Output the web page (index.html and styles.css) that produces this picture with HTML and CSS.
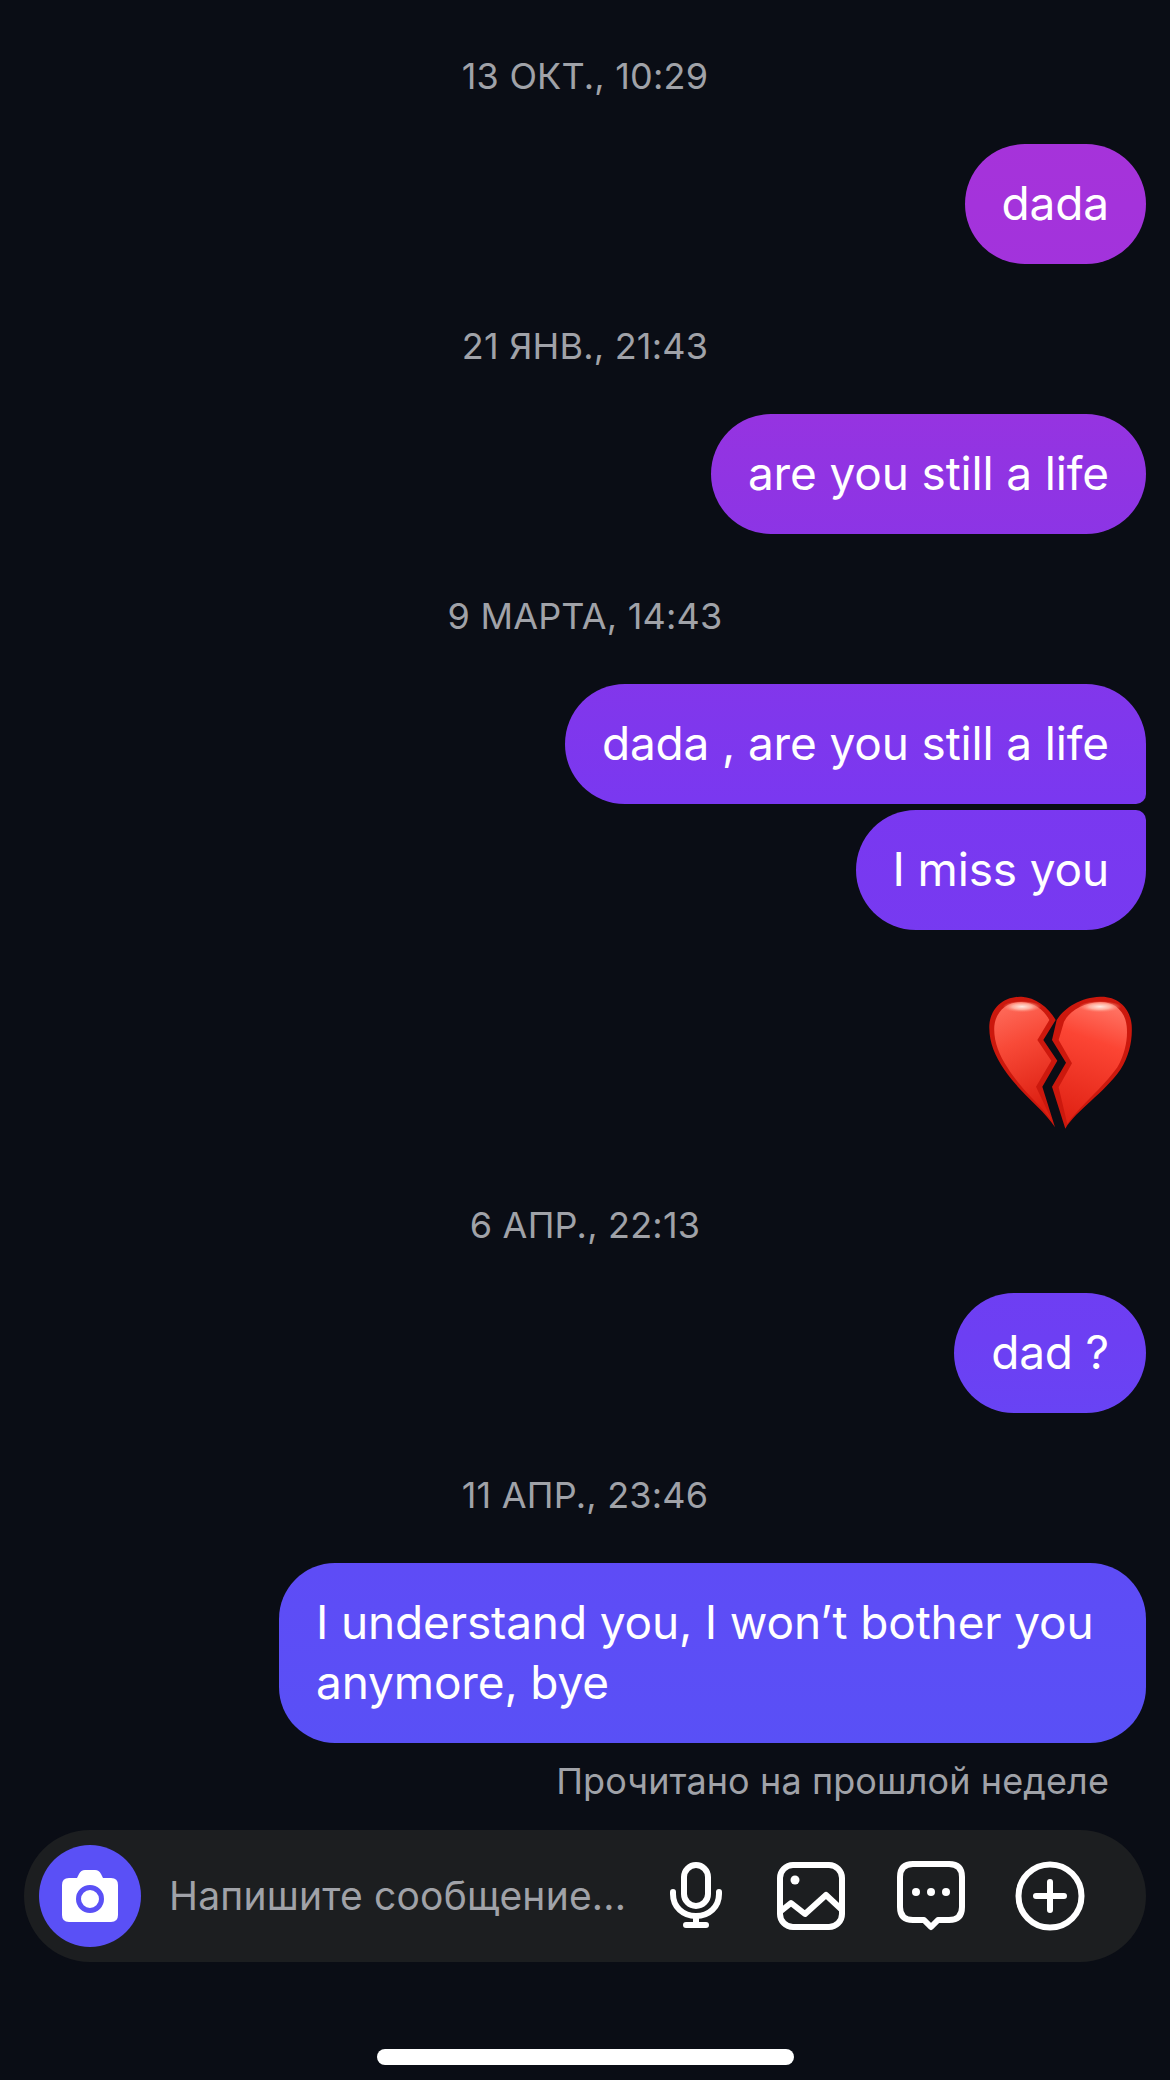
FILE: index.html
```html
<!DOCTYPE html>
<html lang="ru">
<head>
<meta charset="utf-8">
<title>Чат</title>
<link rel="stylesheet" href="styles.css">
</head>
<body>
<main class="screen">
  <section class="thread">
    <p class="stamp">13 ОКТ., 10:29</p>
    <div class="bubble">dada</div>

    <p class="stamp">21 ЯНВ., 21:43</p>
    <div class="bubble">are you still a life</div>

    <p class="stamp">9 МАРТА, 14:43</p>
    <div class="group">
      <div class="bubble first">dada , are you still a life</div>
      <div class="bubble last">I miss you</div>
    </div>

    <div class="emoji">
      <svg class="heart" viewBox="0 0 570 510" width="190" height="170" aria-label="💔">
        <defs>
          <linearGradient id="hl" x1="0" y1="0" x2="0.2" y2="1">
            <stop offset="0" stop-color="#ff7060"/>
            <stop offset="0.4" stop-color="#f84a38"/>
            <stop offset="1" stop-color="#dd2012"/>
          </linearGradient>
          <linearGradient id="hr" x1="0.5" y1="0" x2="0.3" y2="1">
            <stop offset="0" stop-color="#ff7060"/>
            <stop offset="0.3" stop-color="#fc4534"/>
            <stop offset="1" stop-color="#e02214"/>
          </linearGradient>
          <radialGradient id="gloss">
            <stop offset="0" stop-color="#ffeae2"/>
            <stop offset="0.5" stop-color="#ffc0b0" stop-opacity="0.8"/>
            <stop offset="1" stop-color="#ff8a78" stop-opacity="0"/>
          </radialGradient>
        </defs>
        <path class="heart-rim" d="M285 472 C252 418 180 370 132 298 C104 256 86 215 88 165 C92 110 135 78 185 80 C225 82 265 110 287 150 L250 210 L292 272 L247 350 Z"/>
        <path class="heart-rim" d="M316 476 C350 420 432 370 482 298 C508 256 518 210 515 165 C510 110 470 78 420 80 C365 82 315 110 290 150 L276 210 L318 278 L276 350 Z"/>
        <path fill="url(#hl)" d="M276 452 C240 402 182 358 142 292 C116 252 100 210 103 168 C108 120 145 95 185 96 C220 98 250 116 268 150 L232 210 L274 272 L228 350 Z"/>
        <path fill="url(#hr)" d="M322 462 C355 412 425 358 472 292 C496 250 504 205 500 168 C495 120 460 95 420 96 C375 98 332 118 312 155 L296 210 L336 280 L296 352 Z"/>
        <ellipse cx="186" cy="110" rx="58" ry="17" fill="url(#gloss)"/>
        <ellipse cx="420" cy="110" rx="64" ry="17" fill="url(#gloss)"/>
      </svg>
    </div>

    <p class="stamp stamp-after-emoji">6 АПР., 22:13</p>
    <div class="bubble">dad ?</div>

    <p class="stamp">11 АПР., 23:46</p>
    <div class="bubble wide">I understand you, I won’t bother you anymore, bye</div>

    <p class="receipt">Прочитано на прошлой неделе</p>
  </section>

  <form class="composer">
    <span class="camera">
      <svg viewBox="0 0 56 52" width="56" height="52" aria-hidden="true">
        <path class="solid" d="M6 8 H15 L17 4 Q19 0 23 0 H33 Q37 0 39 4 L41 8 H49 Q56 8 56 15 V45 Q56 52 49 52 H7 Q0 52 0 45 V15 Q0 8 7 8 Z"/>
        <circle class="lens" cx="28" cy="29" r="11.5"/>
      </svg>
    </span>
    <span class="placeholder">Напишите сообщение...</span>
    <span class="tools">
      <svg class="tool tool-mic" viewBox="0 0 52 68" width="52" height="68" aria-hidden="true">
        <rect class="line" x="14" y="3" width="24" height="41" rx="12"/>
        <path class="line" d="M3 30 V32 C3 45 13 54 26 54 C39 54 49 45 49 32 V30"/>
        <path class="line" d="M26 54 V63 M16 63 H36"/>
      </svg>
      <svg class="tool" viewBox="0 0 68 68" width="68" height="68" aria-hidden="true">
        <rect class="line" x="3" y="3" width="62" height="62" rx="13"/>
        <circle class="dot" cx="18" cy="18" r="4.5"/>
        <path class="line" d="M4 49 L14 41 L28 52 L49 33 L64 47"/>
      </svg>
      <svg class="tool" viewBox="0 0 68 70" width="68" height="70" aria-hidden="true">
        <path class="line" d="M16 3 H52 Q65 3 65 16 V46 Q65 59 52 59 H41 L34 66 L27 59 H16 Q3 59 3 46 V16 Q3 3 16 3 Z"/>
        <circle class="dot" cx="19" cy="31" r="4"/>
        <circle class="dot" cx="34" cy="31" r="4"/>
        <circle class="dot" cx="49" cy="31" r="4"/>
      </svg>
      <svg class="tool tool-plus" viewBox="0 0 70 70" width="70" height="70" aria-hidden="true">
        <circle class="line" cx="35" cy="35" r="31.5"/>
        <path class="line" d="M35 21 V49 M21 35 H49"/>
      </svg>
    </span>
  </form>

  <div class="home"></div>
</main>
</body>
</html>
```

FILE: styles.css
```css
* { box-sizing: border-box; }

html, body {
  margin: 0;
  padding: 0;
  background: #0a0d15;
}

.screen {
  width: 1170px;
  height: 2080px;
  display: flex;
  flex-direction: column;
  font-family: Inter, "Noto Sans", sans-serif;
  overflow: hidden;
}

.thread {
  display: flex;
  flex-direction: column;
  align-items: flex-end;
  padding: 56px 24px 0;
}

.stamp {
  align-self: center;
  margin: 62px 0 48px;
  font-size: 36px;
  line-height: 40px;
  letter-spacing: 0.2px;
  color: #a0a2a8;
  white-space: nowrap;
}

.stamp:first-child { margin-top: 0; }
.stamp-after-emoji { margin-top: 80px; }

.bubble {
  height: 120px;
  padding: 0 37px 2px;
  display: flex;
  align-items: center;
  font-size: 46px;
  line-height: 60px;
  letter-spacing: -0.15px;
  color: #fff;
  border-radius: 60px;
  background: linear-gradient(180deg, #a633da 140px, #a233dc 270px, #9034e3 480px, #7a38f0 800px, #6d3ff3 1340px, #5e4cf6 1570px, #5950f6 1745px) fixed;
}

.group {
  display: flex;
  flex-direction: column;
  align-items: flex-end;
  gap: 6px;
}

.first { border-bottom-right-radius: 10px; }
.last { border-top-right-radius: 10px; }

.emoji {
  margin: 55px -4px 0 0;
  height: 140px;
  display: flex;
  align-items: center;
}

.heart { display: block; filter: blur(0.4px); }
.heart-rim { fill: #cc180d; }

.wide {
  height: 180px;
  width: 867px;
  border-radius: 56px;
}

.receipt {
  margin: 18px 37px 0 0;
  font-size: 36px;
  line-height: 40px;
  letter-spacing: 0.1px;
  color: #a0a2a8;
  white-space: nowrap;
}

.composer {
  margin: 29px 24px 0;
  height: 132px;
  padding: 0 61px 0 15px;
  display: flex;
  align-items: center;
  border-radius: 66px;
  background: #1c1e20;
}

.camera {
  flex: none;
  width: 102px;
  height: 102px;
  border-radius: 50%;
  background: #5a50f6;
  display: flex;
  align-items: center;
  justify-content: center;
}

.solid { fill: #fff; }
.lens { fill: #fff; stroke: #5a50f6; stroke-width: 5; }

.placeholder {
  margin-left: 28px;
  font-size: 39px;
  line-height: 44px;
  letter-spacing: 0.2px;
  color: #a0a2a8;
  white-space: nowrap;
}

.tools {
  margin-left: auto;
  display: flex;
  align-items: center;
  gap: 52px;
}

.tool { display: block; }
.tool-mic { margin-right: 3px; }
.tool-plus { margin-left: -2px; }

.line {
  fill: none;
  stroke: #fff;
  stroke-width: 6;
  stroke-linecap: round;
  stroke-linejoin: round;
}

.dot { fill: #fff; }

.home {
  margin: 87px auto 0;
  width: 417px;
  height: 16px;
  border-radius: 8px;
  background: #fff;
}
```
